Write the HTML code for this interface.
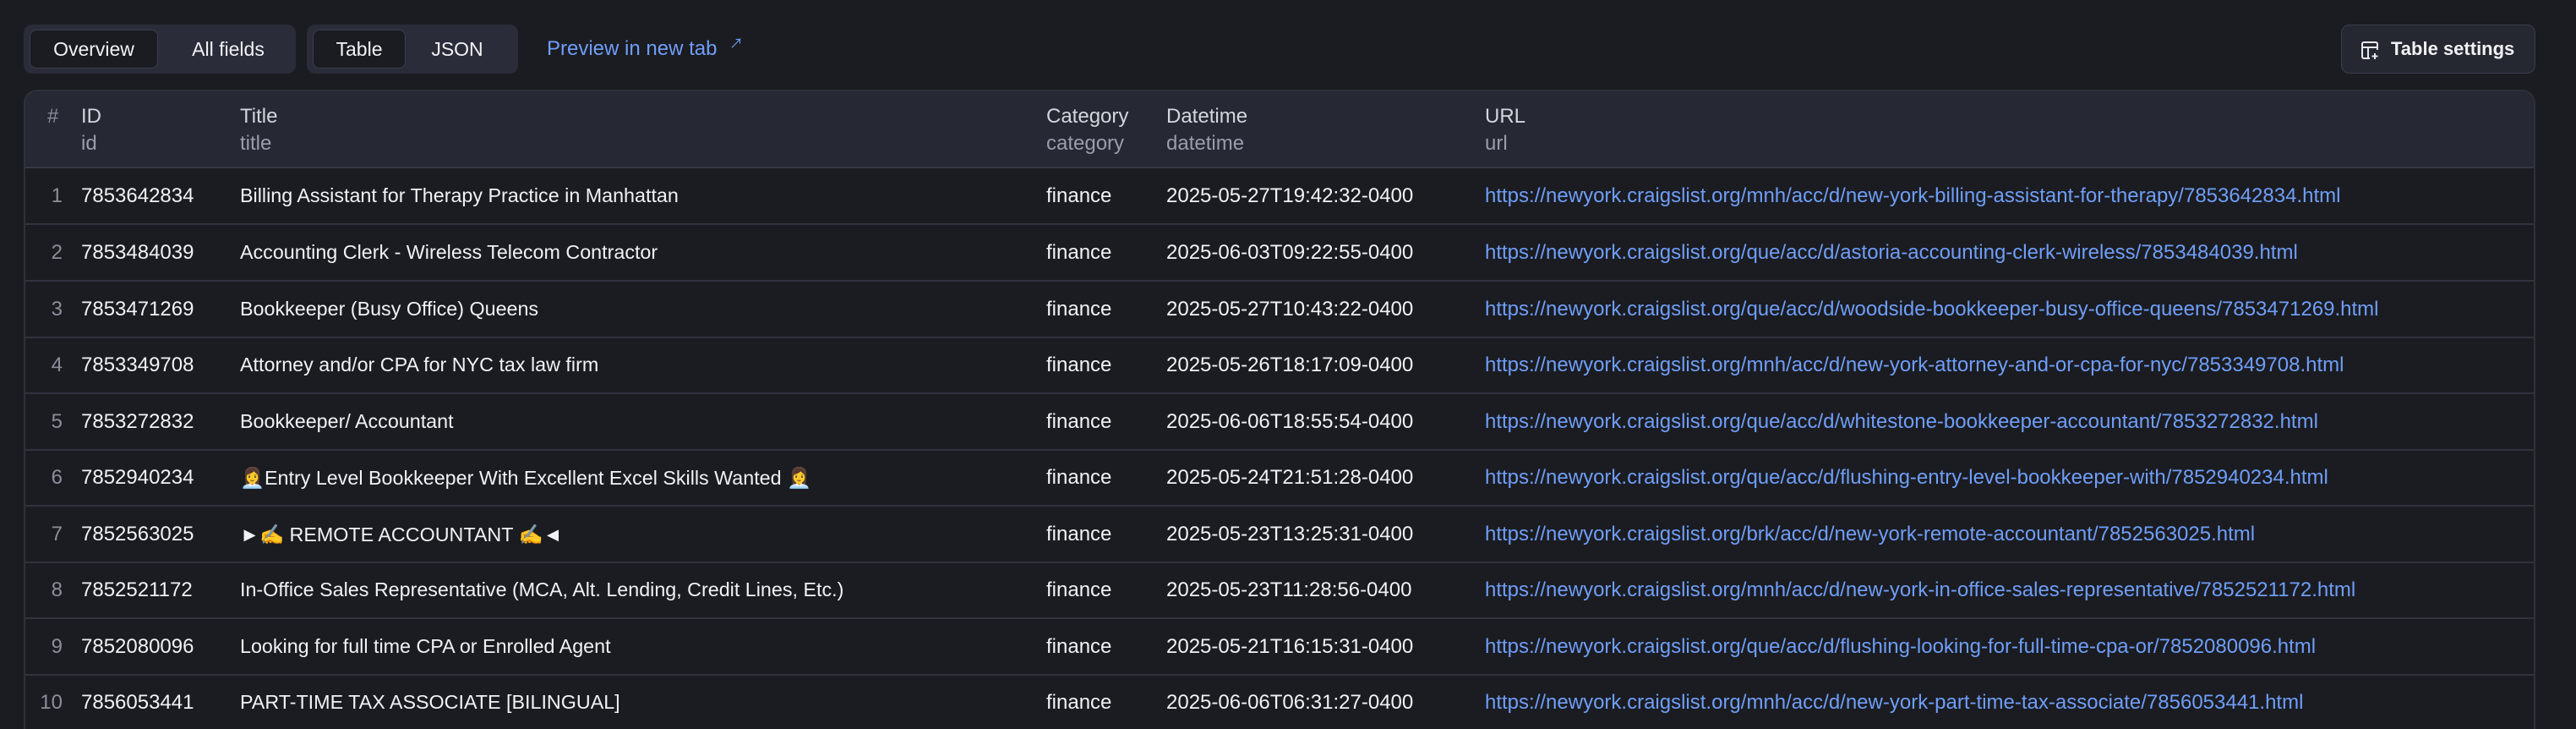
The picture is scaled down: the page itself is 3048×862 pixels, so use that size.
<!DOCTYPE html>
<html><head><meta charset="utf-8"><style>
*{box-sizing:border-box;margin:0;padding:0}
html,body{width:3048px;height:862px;overflow:hidden}
body{background:#1b1c21;font-family:"Liberation Sans","Noto Sans CJK SC",sans-serif;color:#f1f2f5;position:relative;font-size:24px}
.grp{position:absolute;top:29px;height:58px;background:#2a2d39;border-radius:10px}
.btn{position:absolute;top:6px;height:46px;border-radius:8px;line-height:46px;text-align:center;font-size:23px;color:#f1f2f5}
.act{background:#1b1c21;border:1px solid #3a3d4b;line-height:44px}
.link{color:#6f9ef8}
.tbl{position:absolute;left:28px;top:106px;width:2972px;height:756px;border:2px solid #2e303c;border-bottom:none;border-radius:16px 16px 0 0;overflow:hidden}
.hd{position:absolute;left:0;top:0;width:100%;height:91px;background:#262833;border-bottom:2px solid #353846}
.c{position:absolute;white-space:nowrap}
.h1{top:16px;color:#d4d6de;font-size:24px}
.h2{top:48px;color:#9a9dab;font-size:24px}
.row{position:absolute;left:0;width:100%;height:67px;border-bottom:2px solid #30323e}
.row .c{top:19px}
.t{font-size:23.3px}
.n{color:#8b8e9b;width:44px;text-align:right;left:0}
</style></head><body>
<div class="grp" style="left:28px;width:322px">
 <div class="btn act" style="left:7px;width:152px">Overview</div>
 <div class="btn" style="left:172px;width:140px">All fields</div>
</div>
<div class="grp" style="left:363px;width:250px">
 <div class="btn act" style="left:7px;width:110px">Table</div>
 <div class="btn" style="left:128px;width:100px">JSON</div>
</div>
<div class="link" style="position:absolute;left:647px;top:44px;font-size:24px">Preview in new tab <span style="font-size:16px;position:relative;top:-8px;left:8px">↗</span></div>
<div style="position:absolute;left:2770px;top:29px;width:230px;height:58px;border:1px solid #3a3d4b;background:#252731;border-radius:10px">
 <svg style="position:absolute;left:22px;top:18px" width="23" height="23" viewBox="0 0 23 23" fill="none" stroke="#e8e9ee" stroke-width="2"><path d="M11 21H4a2 2 0 0 1-2-2V4a2 2 0 0 1 2-2h14a2 2 0 0 1 2 2v7M2 8h18M9 8v13M17 15v7M13.5 18.5h7"/></svg>
 <div style="position:absolute;left:58px;top:15px;font-size:22px;font-weight:bold;color:#f1f2f5">Table settings</div>
</div>
<div class="tbl">
 <div class="hd">
  <div class="c h1" style="left:26px;color:#8b8e9b">#</div>
  <div class="c h1" style="left:66px">ID</div><div class="c h2" style="left:66px">id</div>
  <div class="c h1" style="left:254px">Title</div><div class="c h2" style="left:254px">title</div>
  <div class="c h1" style="left:1208px">Category</div><div class="c h2" style="left:1208px">category</div>
  <div class="c h1" style="left:1350px">Datetime</div><div class="c h2" style="left:1350px">datetime</div>
  <div class="c h1" style="left:1727px">URL</div><div class="c h2" style="left:1727px">url</div>
 </div>
 <div class="row" style="top:91px"><div class="c n">1</div><div class="c" style="left:66px">7853642834</div><div class="c t" style="left:254px">Billing Assistant for Therapy Practice in Manhattan</div><div class="c" style="left:1208px">finance</div><div class="c" style="left:1350px">2025-05-27T19:42:32-0400</div><div class="c link" style="left:1727px">https://newyork.craigslist.org/mnh/acc/d/new-york-billing-assistant-for-therapy/7853642834.html</div></div>
 <div class="row" style="top:158px"><div class="c n">2</div><div class="c" style="left:66px">7853484039</div><div class="c t" style="left:254px">Accounting Clerk - Wireless Telecom Contractor</div><div class="c" style="left:1208px">finance</div><div class="c" style="left:1350px">2025-06-03T09:22:55-0400</div><div class="c link" style="left:1727px">https://newyork.craigslist.org/que/acc/d/astoria-accounting-clerk-wireless/7853484039.html</div></div>
 <div class="row" style="top:225px"><div class="c n">3</div><div class="c" style="left:66px">7853471269</div><div class="c t" style="left:254px">Bookkeeper (Busy Office) Queens</div><div class="c" style="left:1208px">finance</div><div class="c" style="left:1350px">2025-05-27T10:43:22-0400</div><div class="c link" style="left:1727px">https://newyork.craigslist.org/que/acc/d/woodside-bookkeeper-busy-office-queens/7853471269.html</div></div>
 <div class="row" style="top:291px"><div class="c n">4</div><div class="c" style="left:66px">7853349708</div><div class="c t" style="left:254px">Attorney and/or CPA for NYC tax law firm</div><div class="c" style="left:1208px">finance</div><div class="c" style="left:1350px">2025-05-26T18:17:09-0400</div><div class="c link" style="left:1727px">https://newyork.craigslist.org/mnh/acc/d/new-york-attorney-and-or-cpa-for-nyc/7853349708.html</div></div>
 <div class="row" style="top:358px"><div class="c n">5</div><div class="c" style="left:66px">7853272832</div><div class="c t" style="left:254px">Bookkeeper/ Accountant</div><div class="c" style="left:1208px">finance</div><div class="c" style="left:1350px">2025-06-06T18:55:54-0400</div><div class="c link" style="left:1727px">https://newyork.craigslist.org/que/acc/d/whitestone-bookkeeper-accountant/7853272832.html</div></div>
 <div class="row" style="top:424px"><div class="c n">6</div><div class="c" style="left:66px">7852940234</div><div class="c t" style="left:254px">👩‍💼Entry Level Bookkeeper With Excellent Excel Skills Wanted 👩‍💼</div><div class="c" style="left:1208px">finance</div><div class="c" style="left:1350px">2025-05-24T21:51:28-0400</div><div class="c link" style="left:1727px">https://newyork.craigslist.org/que/acc/d/flushing-entry-level-bookkeeper-with/7852940234.html</div></div>
 <div class="row" style="top:491px"><div class="c n">7</div><div class="c" style="left:66px">7852563025</div><div class="c t" style="left:254px">►✍ REMOTE ACCOUNTANT ✍◄</div><div class="c" style="left:1208px">finance</div><div class="c" style="left:1350px">2025-05-23T13:25:31-0400</div><div class="c link" style="left:1727px">https://newyork.craigslist.org/brk/acc/d/new-york-remote-accountant/7852563025.html</div></div>
 <div class="row" style="top:557px"><div class="c n">8</div><div class="c" style="left:66px">7852521172</div><div class="c t" style="left:254px">In-Office Sales Representative (MCA, Alt. Lending, Credit Lines, Etc.)</div><div class="c" style="left:1208px">finance</div><div class="c" style="left:1350px">2025-05-23T11:28:56-0400</div><div class="c link" style="left:1727px">https://newyork.craigslist.org/mnh/acc/d/new-york-in-office-sales-representative/7852521172.html</div></div>
 <div class="row" style="top:624px"><div class="c n">9</div><div class="c" style="left:66px">7852080096</div><div class="c t" style="left:254px">Looking for full time CPA or Enrolled Agent</div><div class="c" style="left:1208px">finance</div><div class="c" style="left:1350px">2025-05-21T16:15:31-0400</div><div class="c link" style="left:1727px">https://newyork.craigslist.org/que/acc/d/flushing-looking-for-full-time-cpa-or/7852080096.html</div></div>
 <div class="row" style="top:690px"><div class="c n">10</div><div class="c" style="left:66px">7856053441</div><div class="c t" style="left:254px">PART-TIME TAX ASSOCIATE [BILINGUAL]</div><div class="c" style="left:1208px">finance</div><div class="c" style="left:1350px">2025-06-06T06:31:27-0400</div><div class="c link" style="left:1727px">https://newyork.craigslist.org/mnh/acc/d/new-york-part-time-tax-associate/7856053441.html</div></div>
</div>
</body></html>
